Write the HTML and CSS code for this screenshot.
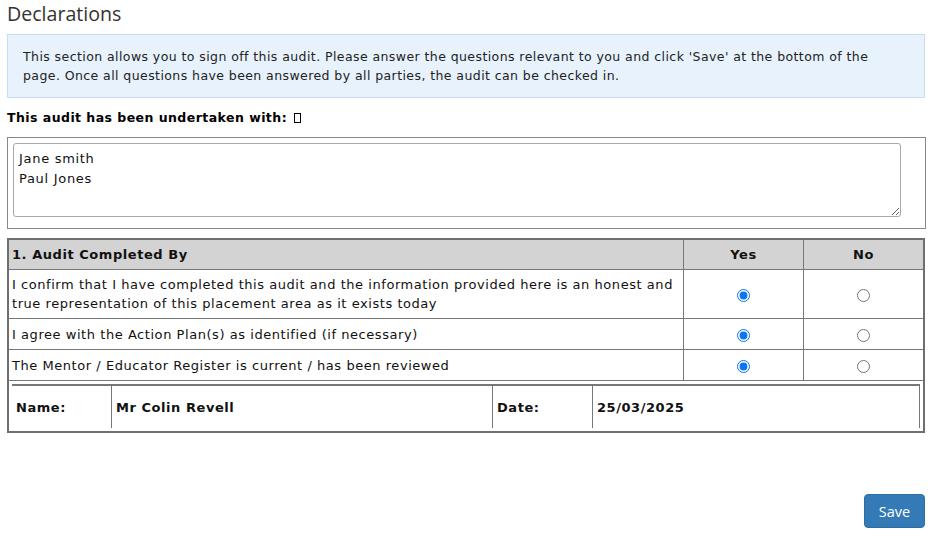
FILE: index.html
```html
<!DOCTYPE html>
<html>
<head>
<meta charset="utf-8">
<link rel="stylesheet" href="styles.css">
</head>
<body>
<div class="page">
  <h2 class="title">Declarations</h2>
  <div class="info">This section allows you to sign off this audit. Please answer the questions relevant to you and click 'Save' at the bottom of the page. Once all questions have been answered by all parties, the audit can be checked in.</div>
  <div class="label">This audit has been undertaken with: <span class="tofu"></span></div>
  <div class="tabox">
    <textarea class="names">Jane smith
Paul Jones</textarea>
  </div>
  <table class="audit">
    <thead>
      <tr>
        <th class="q">1. Audit Completed By</th>
        <th class="c">Yes</th>
        <th class="c">No</th>
      </tr>
    </thead>
    <tbody>
      <tr class="r1">
        <td>I confirm that I have completed this audit and the information provided here is an honest and true representation of this placement area as it exists today</td>
        <td class="c"><input type="radio" name="q1" checked></td>
        <td class="c"><input type="radio" name="q1"></td>
      </tr>
      <tr class="r2">
        <td>I agree with the Action Plan(s) as identified (if necessary)</td>
        <td class="c"><input type="radio" name="q2" checked></td>
        <td class="c"><input type="radio" name="q2"></td>
      </tr>
      <tr class="r2">
        <td>The Mentor / Educator Register is current / has been reviewed</td>
        <td class="c"><input type="radio" name="q3" checked></td>
        <td class="c"><input type="radio" name="q3"></td>
      </tr>
      <tr class="sign">
        <td colspan="3">
          <table class="signt">
            <tr>
              <td class="k1">Name:</td>
              <td class="v1">Mr Colin Revell</td>
              <td class="k2">Date:</td>
              <td class="v2">25/03/2025</td>
            </tr>
          </table>
        </td>
      </tr>
    </tbody>
  </table>
  <div class="actions"><button class="save">Save</button></div>
</div>
</body>
</html>
```
FILE: styles.css
```css
html, body {
  margin: 0;
  padding: 0;
  background: #fff;
}
body {
  font-family: "DejaVu Sans", Verdana, sans-serif;
  color: #111;
  font-size: 13px;
}
.page {
  width: 918px;
  padding-left: 7px;
}
.title {
  font-family: "Open Sans", "Noto Sans", sans-serif;
  font-weight: 400;
  font-size: 19.6px;
  color: #333;
  margin: 0;
  height: 28px;
  line-height: 28px;
}
.info {
  margin-top: 6px;
  background: #e7f2fd;
  border: 1px solid #c7ddf4;
  padding: 12px 15px;
  font-size: 12.5px;
  letter-spacing: 0.42px;
  line-height: 19px;
  color: #222;
}
.label {
  font-weight: bold;
  font-size: 12.5px;
  letter-spacing: 0.45px;
  line-height: 18px;
  margin-top: 11px;
  color: #000;
}
.tofu {
  display: inline-block;
  width: 5px;
  height: 8px;
  border: 1px solid #000;
  vertical-align: -1px;
  margin-left: 2px;
}
.tabox {
  margin-top: 10px;
  width: 907px;
  border: 1px solid #888;
  padding: 5px 5px 11px 5px;
}
.names {
  display: block;
  box-sizing: border-box;
  width: 888px;
  height: 74px;
  border: 1px solid #a9a9a9;
  border-radius: 3px;
  padding: 5px 5px;
  margin: 0;
  font-family: "DejaVu Sans", Verdana, sans-serif;
  font-size: 13px;
  letter-spacing: 0.7px;
  line-height: 20px;
  color: #111;
  resize: vertical;
}
.audit {
  margin-top: 9px;
  width: 918px;
  border-collapse: collapse;
  border: 2px solid #6f6f6f;
  font-size: 13px;
  letter-spacing: 0.55px;
  line-height: 19px;
}
.audit th, .audit > tbody > tr > td {
  border: 1px solid #777;
  padding: 5px 3px;
  text-align: left;
  vertical-align: middle;
}
.audit th {
  background: #d3d3d3;
  height: 18px;
  font-weight: bold;
}
.audit th.c, .audit td.c {
  text-align: center;
  width: 113px;
}
.audit th.q {
  width: auto;
}
.r1 td {
  height: 38px;
}
.r2 td {
  height: 20px;
}
.audit input[type=radio] {
  margin: 0;
  width: 13px;
  height: 13px;
  vertical-align: middle;
  accent-color: #0b75f5;
}
.audit > tbody > tr.sign > td {
  padding: 3px 3px 3px 3px;
  border-bottom: 0;
}
.signt {
  width: 100%;
  border-collapse: collapse;
  border-top: 2px solid #777;
  border-right: 1px solid #777;
  font-weight: bold;
  font-size: 13px;
}
.signt td {
  height: 42px;
  padding: 0 4px;
  border-left: 1px solid #777;
  vertical-align: middle;
}
.signt td.k1 {
  border-left: 0;
  width: 91px;
  padding-left: 4px;
}
.signt td.v1 {
  width: 372px;
}
.signt td.k2 {
  width: 91px;
}
.actions {
  display: flex;
  justify-content: flex-end;
  margin-top: 61px;
}
.save {
  font-family: "Open Sans", "Noto Sans", sans-serif;
  font-size: 14.5px;
  color: #fff;
  background: #337ab7;
  border: 1px solid #2e6da4;
  border-radius: 4px;
  width: 61px;
  height: 34px;
  padding: 0;
}
```
